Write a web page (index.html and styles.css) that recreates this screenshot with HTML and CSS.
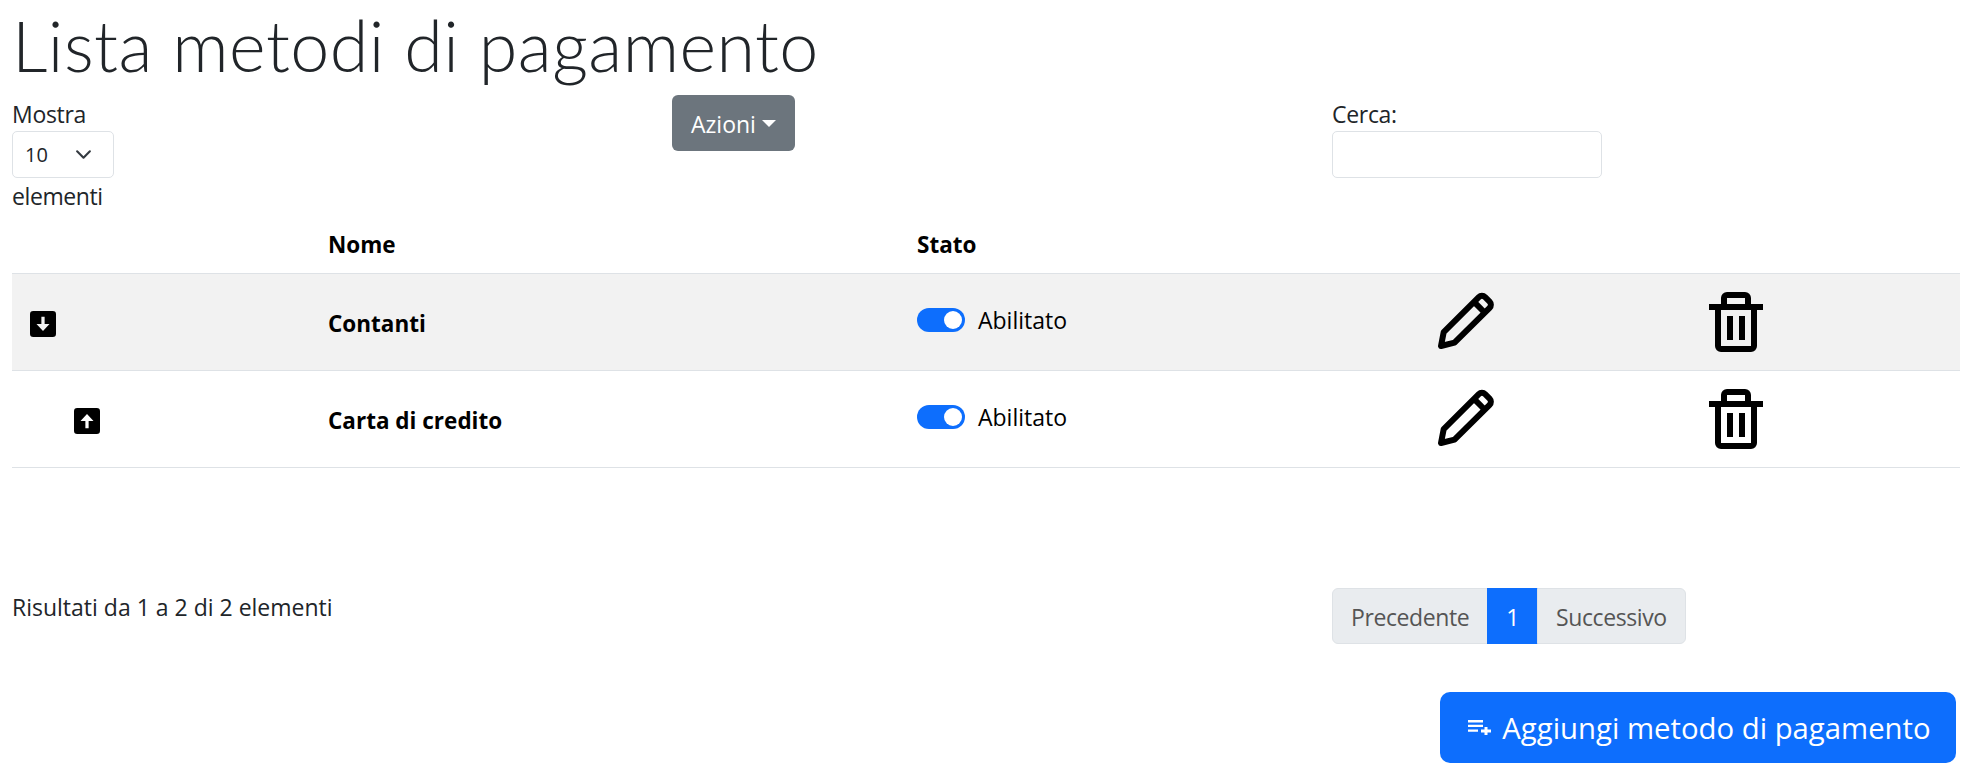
FILE: index.html
```html
<!DOCTYPE html>
<html lang="it">
<head>
    <meta charset="UTF-8">
    <meta name="viewport" content="width=device-width, initial-scale=1.0">
    <title>Lista metodi di pagamento</title>
    <link rel="stylesheet" href="styles.css">
</head>
<body>
    <h1>Lista metodi di pagamento</h1>

    <div class="toolbar">
        <div class="length-box">
            <label for="length">Mostra</label>
            <select id="length" class="length-select">
                <option>10</option>
                <option>25</option>
            </select>
            <span>elementi</span>
        </div>
        <div>
            <button class="btn btn-actions">Azioni<span class="caret"></span></button>
        </div>
        <div class="search-box">
            <label for="search">Cerca:</label>
            <input type="search" id="search" class="search-input">
        </div>
    </div>

    <table class="methods">
        <colgroup>
            <col class="col-move">
            <col class="col-name">
            <col class="col-state">
            <col class="col-edit">
            <col class="col-delete">
        </colgroup>
        <thead>
            <tr>
                <th></th>
                <th>Nome</th>
                <th>Stato</th>
                <th></th>
                <th></th>
            </tr>
        </thead>
        <tbody>
            <tr class="striped">
                <td>
                    <svg class="move move-down" viewBox="0 0 16 16"><path fill-rule="evenodd" d="M2 0h12a2 2 0 0 1 2 2v12a2 2 0 0 1-2 2H2a2 2 0 0 1-2-2V2a2 2 0 0 1 2-2zM7 3.500h2V8h3l-4 4.300L4 8h3z"/></svg>
                </td>
                <td class="name">Contanti</td>
                <td>
                    <div class="state"><span class="switch"></span>Abilitato</div>
                </td>
                <td>
                    <svg class="action" viewBox="0 0 24 24"><path class="line" d="M4 20l.9-4.6L16.6 3.7a1.5 1.5 0 0 1 2.1 0l1.5 1.5a1.5 1.5 0 0 1 0 2.1L8.500 18.900z"/><path class="line" d="M15 5.300l3.700 3.700"/></svg>
                </td>
                <td>
                    <svg class="action" viewBox="0 0 24 24"><path d="M3 6h4V4a2 2 0 0 1 2-2h6a2 2 0 0 1 2 2v2h4v2h-2v12a2 2 0 0 1-2 2H7a2 2 0 0 1-2-2V8H3zm6-2v2h6V4zM7 8v12h10V8zm2 2h2v8H9zm4 0h2v8h-2z"/></svg>
                </td>
            </tr>
            <tr>
                <td>
                    <svg class="move move-up" viewBox="0 0 16 16"><path fill-rule="evenodd" d="M2 0h12a2 2 0 0 1 2 2v12a2 2 0 0 1-2 2H2a2 2 0 0 1-2-2V2a2 2 0 0 1 2-2zM7 12.500h2V8h3L8 3.700 4 8h3z"/></svg>
                </td>
                <td class="name">Carta di credito</td>
                <td>
                    <div class="state"><span class="switch"></span>Abilitato</div>
                </td>
                <td>
                    <svg class="action" viewBox="0 0 24 24"><path class="line" d="M4 20l.9-4.6L16.6 3.7a1.5 1.5 0 0 1 2.1 0l1.5 1.5a1.5 1.5 0 0 1 0 2.1L8.500 18.900z"/><path class="line" d="M15 5.300l3.700 3.700"/></svg>
                </td>
                <td>
                    <svg class="action" viewBox="0 0 24 24"><path d="M3 6h4V4a2 2 0 0 1 2-2h6a2 2 0 0 1 2 2v2h4v2h-2v12a2 2 0 0 1-2 2H7a2 2 0 0 1-2-2V8H3zm6-2v2h6V4zM7 8v12h10V8zm2 2h2v8H9zm4 0h2v8h-2z"/></svg>
                </td>
            </tr>
        </tbody>
    </table>

    <div class="footer-row">
        <div class="info">Risultati da 1 a 2 di 2 elementi</div>
        <div></div>
        <ul class="pagination">
            <li class="page disabled">Precedente</li>
            <li class="page active">1</li>
            <li class="page disabled">Successivo</li>
        </ul>
    </div>

    <div class="add-row">
        <button class="btn btn-add">
            <svg class="add-icon" viewBox="0 0 23 15"><path d="M0 0h15v2.500H0zM0 4.800h15v2.200H0zM0 9.500h10v2.200H0zM16.500 7h3v2.500H23v3h-3.500V15h-3v-2.500H13v-3h3.500z"/></svg>Aggiungi metodo di pagamento
        </button>
    </div>
</body>
</html>
```

FILE: styles.css
```css
* {
    box-sizing: border-box;
}
body {
    margin: 0;
    padding: 0 19px 0 12px;
    font-family: "Open Sans", sans-serif;
    font-size: 23px;
    line-height: 36px;
    color: #212529;
    background-color: #fff;
}
h1 {
    margin: 0;
    height: 95px;
    font-family: Lato, sans-serif;
    font-size: 70px;
    font-weight: 300;
    line-height: 90px;
    letter-spacing: 0.45px;
}
label {
    display: block;
    height: 36px;
    padding-top: 1px;
    letter-spacing: -0.3px;
}
.toolbar {
    display: grid;
    grid-template-columns: 660px 660px 1fr;
    height: 118px;
}
.length-box {
    width: 120px;
    letter-spacing: -0.4px;
}
.length-select {
    display: block;
    width: 102px;
    height: 47px;
    padding: 0 0 0 12px;
    border: 1px solid #dee2e6;
    border-radius: 5px;
    font-family: inherit;
    font-size: 20px;
    color: #212529;
    appearance: none;
    background: #fff url("data:image/svg+xml,%3csvg xmlns='http://www.w3.org/2000/svg' viewBox='0 0 16 16'%3e%3cpath fill='none' stroke='%23343a40' stroke-linecap='round' stroke-linejoin='round' stroke-width='2' d='M2 5l6 6 6-6'/%3e%3c/svg%3e") no-repeat right 21px center / 17px 17px;
}
.btn {
    border: 1px solid transparent;
    font-family: inherit;
    color: #fff;
    cursor: pointer;
}
.btn-actions {
    display: flex;
    align-items: center;
    height: 56px;
    padding: 2px 18px 0;
    border-radius: 6px;
    background-color: #6c757d;
    font-size: 23px;
}
.caret {
    margin: -2px 0 0 6px;
    border-top: 7px solid #fff;
    border-left: 7px solid transparent;
    border-right: 7px solid transparent;
}
.search-input {
    display: block;
    width: 270px;
    height: 47px;
    border: 1px solid #dee2e6;
    border-radius: 5px;
}
.methods {
    width: 100%;
    table-layout: fixed;
    border-collapse: collapse;
    color: #000;
}
.col-move {
    width: 304px;
}
.col-name {
    width: 589px;
}
.col-state {
    width: 512px;
}
.col-edit {
    width: 271px;
}
.methods th {
    padding: 14px 12px 10px;
    height: 60px;
    text-align: left;
    font-size: 22.5px;
    font-weight: 700;
    border-bottom: 1px solid #dee2e6;
}
.methods td {
    padding: 12px;
    height: 97px;
    vertical-align: middle;
    border-bottom: 1px solid #dee2e6;
}
.striped {
    background-color: #f2f2f2;
}
.methods .name {
    padding-top: 15px;
    font-size: 22.5px;
    font-weight: 700;
}
.move {
    display: block;
    width: 26px;
    height: 26px;
    margin-top: 4px;
}
.move-down {
    margin-left: 6px;
}
.move-up {
    margin-left: 50px;
}
.state {
    display: flex;
    align-items: center;
    margin-top: -4px;
    line-height: 38px;
}
.switch {
    position: relative;
    width: 48px;
    height: 24px;
    margin-right: 13px;
    border-radius: 12px;
    background-color: #0d6efd;
}
.switch::after {
    content: "";
    position: absolute;
    top: 3px;
    right: 3px;
    width: 18px;
    height: 18px;
    border-radius: 50%;
    background-color: #fff;
}
.action {
    display: block;
    width: 72px;
    height: 72px;
}
.line {
    fill: none;
    stroke: #000;
    stroke-width: 2;
    stroke-linejoin: round;
}
.footer-row {
    display: grid;
    grid-template-columns: 660px 660px 1fr;
    margin-top: 120px;
}
.info {
    padding-top: 1px;
}
.pagination {
    display: flex;
    margin: 0;
    padding: 0;
    list-style: none;
    letter-spacing: -0.4px;
}
.page {
    height: 56px;
    padding: 10px 18px 0;
    border: 1px solid #dee2e6;
    margin-left: -1px;
}
.page:first-child {
    margin-left: 0;
    border-radius: 6px 0 0 6px;
}
.page:last-child {
    border-radius: 0 6px 6px 0;
}
.disabled {
    background-color: #e9ecef;
    color: #555;
}
.active {
    border-color: #0d6efd;
    background-color: #0d6efd;
    color: #fff;
}
.add-row {
    display: flex;
    justify-content: flex-end;
    margin-top: 48px;
    padding-right: 4px;
}
.btn-add {
    display: flex;
    align-items: center;
    justify-content: center;
    width: 516px;
    height: 71px;
    padding: 0 0 0 3px;
    border-radius: 10px;
    background-color: #0d6efd;
    font-size: 29.3px;
    white-space: nowrap;
}
.add-icon {
    width: 23px;
    height: 15px;
    margin-right: 11px;
    fill: #fff;
}
```
